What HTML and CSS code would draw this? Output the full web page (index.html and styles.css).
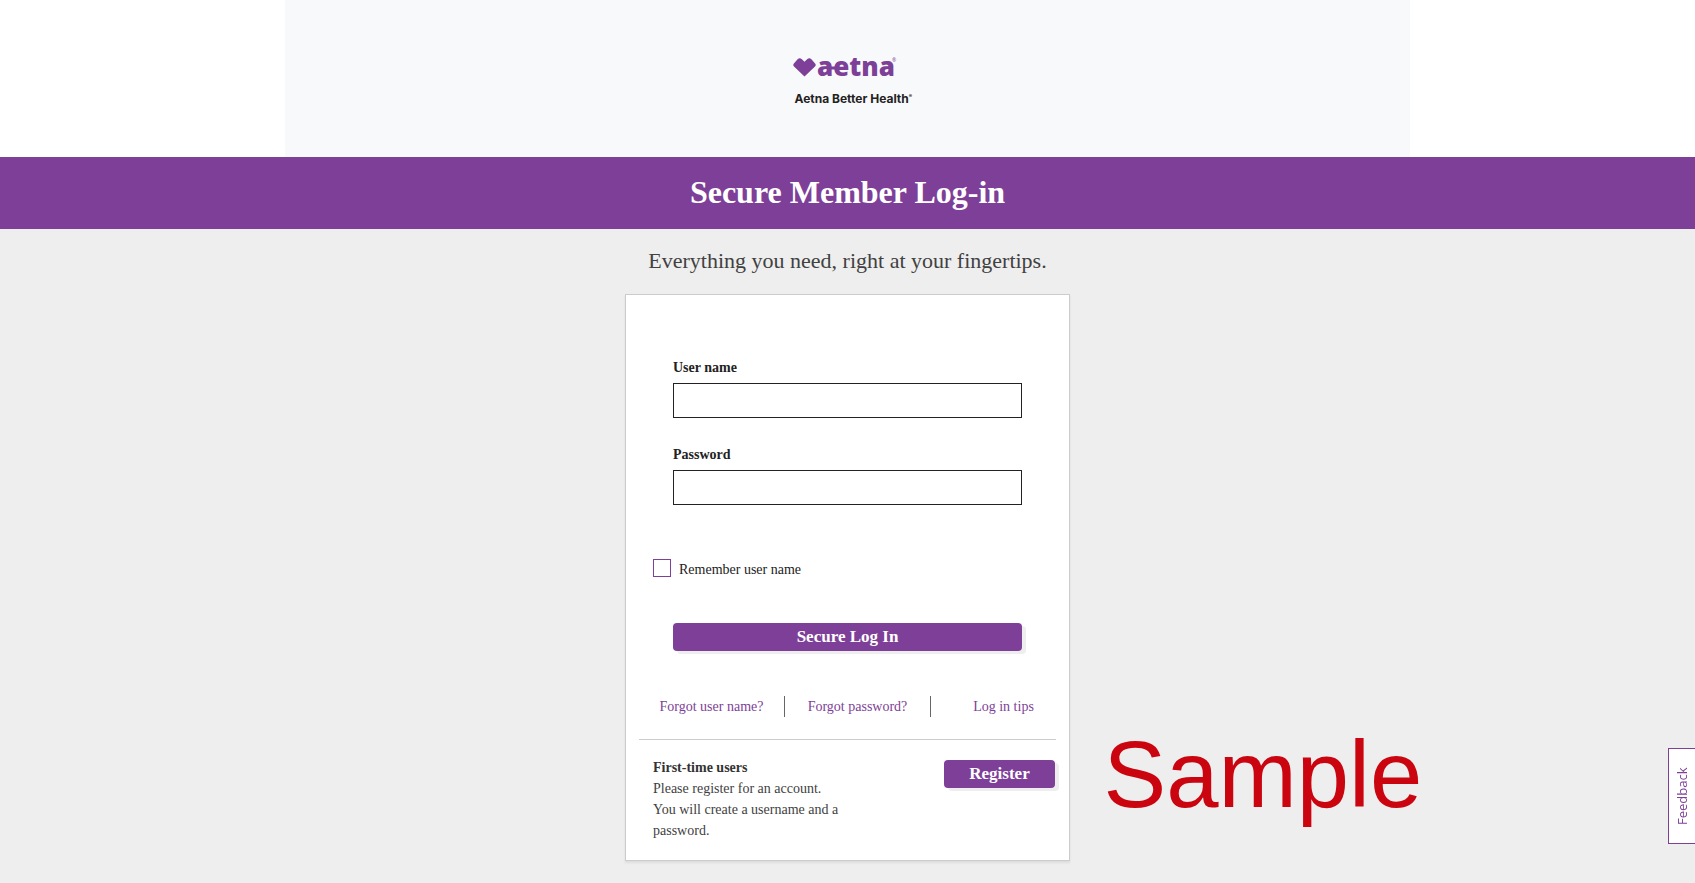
FILE: index.html
```html
<!DOCTYPE html>
<html lang="en">
<head>
<meta charset="utf-8">
<meta name="viewport" content="width=device-width, initial-scale=1">
<title>Secure Member Log-in</title>
<link rel="stylesheet" href="styles.css">
</head>
<body>
<header class="header">
  <div class="header-inner">
    <div class="logo">
      <svg class="logo-mark" viewBox="0 0 122 42" role="img" aria-label="aetna">
        <path d="M11.500 34.500 1 24.400Q-.4 23 .9 21.600L4.600 17.300Q6.600 15.300 8.600 17L11.500 19.800 14.400 17Q16.400 15.300 18.400 17.300L22.100 21.600Q23.400 23 22 24.400Z"/>
        <path d="M35 24.500h8v3h-8z"/>
        <text class="logo-word" x="24" y="34">aetna</text>
        <text class="logo-reg" x="99" y="20">®</text>
      </svg>
      <div class="logo-plan">Aetna Better Health<span class="plan-reg">®</span></div>
    </div>
  </div>
</header>
<div class="banner"><h1 class="title">Secure Member Log-in</h1></div>
<main class="main">
  <p class="lead">Everything you need, right at your fingertips.</p>
  <section class="card">
    <form class="form">
      <div class="field">
        <label class="label" for="user">User name</label>
        <input class="input" id="user" type="text">
      </div>
      <div class="field">
        <label class="label" for="pass">Password</label>
        <input class="input" id="pass" type="password">
      </div>
      <div class="remember">
        <input class="check" id="remember" type="checkbox">
        <label class="remember-label" for="remember">Remember user name</label>
      </div>
      <button class="button login" type="submit">Secure Log In</button>
    </form>
    <nav class="links">
      <a class="link" href="#">Forgot user name?</a>
      <a class="link" href="#">Forgot password?</a>
      <a class="link" href="#">Log in tips</a>
    </nav>
    <div class="register">
      <div class="register-text">
        <h2 class="register-title">First-time users</h2>
        <p class="register-copy">Please register for an account.<br>You will create a username and a password.</p>
      </div>
      <button class="button" type="button">Register</button>
    </div>
  </section>
  <div class="stamp">Sample</div>
</main>
<button class="feedback" type="button">Feedback</button>
</body>
</html>
```
FILE: styles.css
```css
* { box-sizing: border-box; }
body {
  margin: 0;
  min-height: 100vh;
  display: flex;
  flex-direction: column;
  background: #fff;
  color: #222;
  font: 14px/21px "Liberation Serif", "Times New Roman", serif;
}
.header-inner {
  max-width: 1125px;
  margin: 0 auto;
  padding: 42px 16px 51px;
  background: #f8f9fb;
  display: flex;
  justify-content: center;
}
.logo { padding-left: 12px; }
.logo-mark { display: block; width: 122px; height: 42px; fill: #7d3f98; }
.logo-word { font: 800 26px "Open Sans", sans-serif; }
.logo-reg { font: 5px "Open Sans", sans-serif; }
.logo-plan {
  margin-top: 7px;
  padding-left: 2px;
  color: #222;
  font: 700 12px/15px Inter, sans-serif;
}
.plan-reg { font-size: 5px; vertical-align: 5px; line-height: 1px; }
.banner {
  background: #7d3f98;
  padding: 15px 16px 17px;
  text-align: center;
}
.title { margin: 0; color: #fff; font-size: 32px; line-height: 40px; font-weight: 700; }
.main {
  position: relative;
  flex: 1;
  padding: 16px 16px 22px;
  background: #eee;
}
.lead { margin: 0 0 17px; color: #414141; font-size: 22px; line-height: 32px; text-align: center; }
.card {
  max-width: 445px;
  margin: 0 auto;
  padding: 62px 13px 19px;
  background: #fff;
  border: 1px solid #ccc;
  box-shadow: 0 2px 2px #ddd;
}
.form { padding: 0 34px; }
.field { margin-bottom: 26px; }
.label { display: block; margin-bottom: 5px; font-weight: 700; }
.input {
  display: block;
  width: 100%;
  height: 35px;
  padding: 4px 8px;
  background: #fff;
  border: 1px solid #222;
  border-radius: 0;
  font: inherit;
}
.remember {
  display: flex;
  align-items: flex-start;
  gap: 8px;
  margin: 54px 0 43px -20px;
}
.check {
  appearance: none;
  width: 18px;
  height: 18px;
  margin: 0;
  background: #fff;
  border: 1px solid #7d3f98;
}
.check:checked { background: #7d3f98; }
.button {
  min-width: 111px;
  height: 28px;
  padding: 0 16px;
  background: #7d3f98;
  border: 0;
  border-radius: 4px;
  box-shadow: 4px 3px 0 #eee;
  color: #fff;
  font: 700 17px/28px "Liberation Serif", "Times New Roman", serif;
}
.login { display: block; width: 100%; }
.links {
  display: grid;
  grid-template-columns: 145px 146px 1fr;
  padding: 45px 0 22px;
  border-bottom: 1px solid #ccc;
  text-align: center;
}
.link { color: #7d3f98; text-decoration: none; }
.link + .link { border-left: 1px solid #666; }
.link:last-child { padding-left: 20px; }
.register {
  display: flex;
  justify-content: space-between;
  align-items: flex-start;
  gap: 16px;
  padding: 17px 1px 0 14px;
  color: #414141;
}
.register .button { margin-top: 3px; }
.register-text { max-width: 210px; }
.register-title { margin: 0; font-size: 14px; line-height: 21px; color: #333; }
.register-copy { margin: 0; }
.stamp {
  position: absolute;
  left: calc(50% + 256px);
  bottom: 54px;
  color: #cb0510;
  font: 94px/108px "Liberation Sans", Arial, sans-serif;
}
.feedback {
  position: fixed;
  right: -1px;
  bottom: 39px;
  width: 28px;
  height: 96px;
  padding: 0;
  background: #fff;
  border: 1px solid #7d3f98;
  color: #7d3f98;
  font: 13px/26px "Open Sans", sans-serif;
  writing-mode: vertical-rl;
  transform: rotate(180deg);
}
```
